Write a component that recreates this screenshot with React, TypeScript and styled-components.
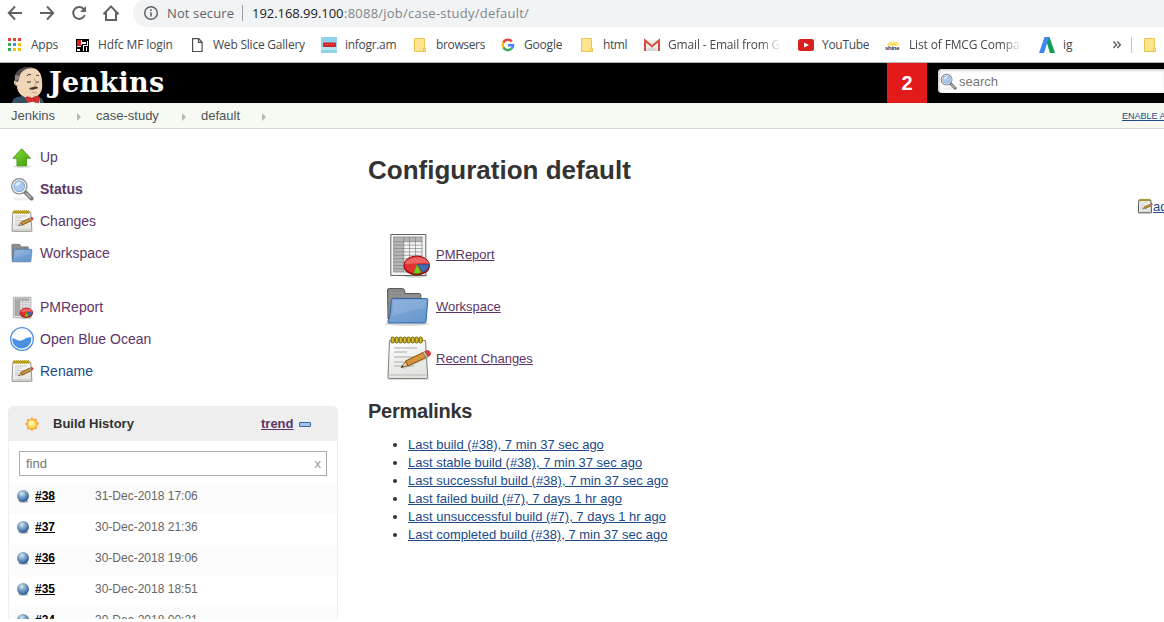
import React from 'react';
import styled, { createGlobalStyle } from 'styled-components';

const Global = createGlobalStyle`
  * { box-sizing: border-box; }
  html, body { margin: 0; padding: 0; background: #fff; overflow: hidden; }
  body { font-family: 'Liberation Sans', Arial, sans-serif; font-size: 13px; color: #333; }
  svg { display: block; flex: none; }
`;

const Page = styled.div`
  width: 1164px;
  height: 619px;
  overflow: hidden;
  display: flex;
  flex-direction: column;
`;

const Toolbar = styled.div`
  display: flex;
  height: 27px;
  flex: none;
  background: #fff;
`;
const NavIcons = styled.div`
  display: flex;
  align-items: center;
  gap: 12px;
  width: 133px;
  padding: 0 0 1px 5px;
`;
const Omnibox = styled.div`
  flex: 1;
  display: flex;
  align-items: center;
  height: 28px;
  margin-top: -1px;
  padding-left: 10px;
  background: #f1f3f4;
  border-radius: 14px 0 0 14px;
  font-family: 'Open Sans', 'Noto Sans', sans-serif;
  font-size: 13px;
  color: #80868b;
  white-space: pre;
`;
const Secure = styled.span`
  width: 67px;
  margin-left: 8px;
  color: #5f6368;
  letter-spacing: 0.12px;
`;
const Bar = styled.i`
  width: 1px;
  height: 16px;
  margin: 0 9px 0 8px;
  background: #9aa0a6;
`;
const Host = styled.span`
  width: 92px;
  color: #202124;
  letter-spacing: -0.04px;
`;
const Path = styled.span`
  letter-spacing: 0.23px;
`;

const Bookmarks = styled.div`
  display: flex;
  align-items: center;
  height: 36px;
  flex: none;
  padding-left: 7px;
  border-bottom: 1px solid #b4b6b9;
  font-family: 'Open Sans', 'Noto Sans', sans-serif;
  font-size: 12px;
  color: #45484c;
`;
const Bookmark = styled.div<{ $w: number; $ls: number }>`
  display: flex;
  align-items: center;
  gap: 8px;
  flex: none;
  width: ${(p) => p.$w}px;
  letter-spacing: ${(p) => p.$ls}px;
  white-space: nowrap;
`;
const BookmarkText = styled.span<{ $fade?: boolean }>`
  overflow: hidden;
  ${(p) => p.$fade && 'width: 113px; -webkit-mask-image: linear-gradient(90deg, #000 82%, transparent);'}
`;
const BarDivider = styled.i`
  width: 1px;
  height: 16px;
  margin: 0 10px 0 9px;
  background: #c4c6c9;
`;

const Header = styled.header`
  display: flex;
  align-items: center;
  height: 40px;
  flex: none;
  background: #000;
`;
const Brand = styled.div`
  display: flex;
  align-items: center;
  width: 887px;
  height: 40px;
  padding-left: 11px;
  gap: 4px;
`;
const BrandName = styled.span`
  font: bold 27px/39px 'DejaVu Serif', serif;
  height: 40px;
  color: #fff;
  letter-spacing: 0.3px;
`;
const Alert = styled.div`
  width: 40px;
  height: 40px;
  background: #e21a1a;
  color: #fff;
  font: bold 20px/40px 'Liberation Sans', sans-serif;
  text-align: center;
`;
const Search = styled.div`
  display: flex;
  align-items: center;
  flex: 1;
  gap: 2px;
  height: 24px;
  margin: -4px 0 0 11px;
  padding-left: 2px;
  border-radius: 4px 0 0 4px;
  background: #fff;
  box-shadow: inset 1px 1px 3px #bbb;
  color: #757575;
`;
const Crumbs = styled.nav`
  display: flex;
  height: 26px;
  flex: none;
  padding-left: 11px;
  background: #f6faf2;
  border-bottom: 1px solid #d3d7cf;
  line-height: 25px;
  color: #4d545d;
`;
const Crumb = styled.span<{ $w: number }>`
  display: flex;
  justify-content: space-between;
  align-items: center;
  width: ${(p) => p.$w}px;
  margin-right: 15px;
`;
const Arrow = styled.i`
  margin-top: 2px;
  border: 4px solid transparent;
  border-left: 4px solid #b5b8b0;
  border-right: 0;
`;
const Refresh = styled.a`
  margin-left: auto;
  width: 42px;
  padding-top: 1px;
  overflow: hidden;
  white-space: nowrap;
  font-size: 9px;
  text-decoration: underline;
  color: #204a87;
`;

const Body = styled.div`
  display: flex;
  flex: 1;
  min-height: 0;
`;
const Side = styled.aside`
  width: 338px;
  padding: 12px 0 0 8px;
`;
const Tasks = styled.div<{ $gap?: number }>`
  display: flex;
  flex-direction: column;
  margin-bottom: ${(p) => p.$gap ?? 0}px;
`;
const Task = styled.a<{ $bold?: boolean; $blue?: boolean }>`
  display: flex;
  align-items: center;
  gap: 6px;
  height: 32px;
  padding-left: 2px;
  font-size: 14px;
  font-weight: ${(p) => (p.$bold ? 'bold' : 'normal')};
  color: ${(p) => (p.$blue ? '#204a87' : '#5c3566')};
`;
const Panel = styled.section`
  width: 330px;
  height: 260px;
  border: 1px solid #eee;
  border-radius: 5px 5px 0 0;
`;
const PanelHead = styled.div`
  display: flex;
  align-items: center;
  height: 34px;
  padding: 0 0 1px 16px;
  background: #eee;
  border-radius: 4px 4px 0 0;
  font-weight: bold;
`;
const PanelTitle = styled.span`
  flex: none;
  width: 208px;
  margin-left: 14px;
`;
const Trend = styled.a`
  width: 38px;
  text-decoration: underline;
  color: #5c3566;
`;
const Find = styled.div`
  display: flex;
  justify-content: space-between;
  align-items: center;
  height: 25px;
  margin: 10px 10px 7px;
  padding: 0 5px 0 6px;
  border: 1px solid #a9a9a9;
  color: #757575;
`;
const Clear = styled.span`
  font-size: 13px;
  color: #999;
`;
const Build = styled.div<{ $odd: boolean }>`
  display: flex;
  align-items: center;
  height: 31px;
  padding: 0 0 5px 7px;
  background: ${(p) => (p.$odd ? '#fbfbfb' : '#fff')};
`;
const BuildNo = styled.a`
  width: 60px;
  margin-left: 5px;
  font-size: 12px;
  font-weight: bold;
  text-decoration: underline;
  color: #000;
`;
const BuildDate = styled.span`
  font-size: 12px;
  color: #666;
`;

const Main = styled.main`
  flex: 1;
  padding: 26px 0 0 30px;
`;
const Title = styled.h1`
  margin: 0;
  font-size: 26px;
  line-height: 30px;
`;
const AddRow = styled.div`
  display: flex;
  justify-content: flex-end;
  align-items: center;
  height: 16px;
  margin-top: 13px;
`;
const AddLink = styled.a`
  width: 11px;
  overflow: hidden;
  white-space: nowrap;
  text-decoration: underline;
  color: #204a87;
`;
const Links = styled.div`
  display: flex;
  flex-direction: column;
  gap: 4px;
  margin: 16px 0 0 16px;
`;
const BigLink = styled.a`
  display: flex;
  align-items: center;
  gap: 4px;
  height: 48px;
  color: #5c3566;
  text-decoration: underline;
`;
const Sub = styled.h2`
  margin: 17px 0 0;
  font-size: 20px;
  line-height: 24px;
  letter-spacing: -0.25px;
`;
const Permalinks = styled.ul`
  margin: 13px 0 0;
  padding-left: 40px;
  line-height: 18px;
`;
const Permalink = styled.a`
  color: #204a87;
  text-decoration: underline;
`;

/* ---------- icons ---------- */

const NavStroke = { fill: 'none', stroke: '#5f6368', strokeWidth: 2 };
const Back = () => (
  <svg width="20" height="20" viewBox="0 0 20 20" {...NavStroke}><path d="M17 10H4M10 3.5 3.8 10l6.2 6.5" /></svg>
);
const Forward = () => (
  <svg width="20" height="20" viewBox="0 0 20 20" {...NavStroke}><path d="M3 10h13M10 3.5 16.2 10 10 16.5" /></svg>
);
const Reload = () => (
  <svg width="20" height="20" viewBox="0 0 20 20" {...NavStroke}>
    <path d="M15 6.300A6 6 0 1 0 15.800 12" /><path d="M17 3v6h-6z" fill="#5f6368" stroke="none" />
  </svg>
);
const Home = () => (
  <svg width="20" height="20" viewBox="0 0 20 20" {...NavStroke}><path d="M2.500 11.300 10 3.400l7.500 7.900M5 9.500v7.500h10V9.500" /></svg>
);
const Info = () => (
  <svg width="16" height="16" viewBox="0 0 16 16">
    <circle cx="8" cy="8" r="6.300" fill="none" stroke="#5f6368" strokeWidth="1.500" />
    <path d="M8 7.200v4.300M8 4.300v1.600" stroke="#5f6368" strokeWidth="1.600" />
  </svg>
);

const AppsIcon = () => {
  const colors = ['#ea4335', '#ea4335', '#ea4335', '#34a853', '#4285f4', '#fbbc05', '#34a853', '#fbbc05', '#fbbc05'];
  return (
    <svg width="16" height="16" viewBox="0 0 16 16">
      {colors.map((c, i) => <rect key={i} x={1 + (i % 3) * 5} y={1 + Math.floor(i / 3) * 5} width="3" height="3" fill={c} />)}
    </svg>
  );
};
const HdfcIcon = () => (
  <svg width="16" height="16" viewBox="0 0 16 16">
    <path fill="#000" d="M2 2h13v13H2z" />
    <path fill="#fff" d="M7 3h1v5H7zM8 5h4v2H8zM3 9h4v1H3zM9 8h5v1H9zM13 4h1v4h-1zM9 9h1v5H9zM3 12h3v2H3zM12 10h1v4h-1z" />
    <path fill="#d81f1f" d="M3 3h4v6H3z" />
  </svg>
);
const PageIcon = () => (
  <svg width="16" height="16" viewBox="0 0 16 16" fill="none" stroke="#4c4f53" strokeWidth="1.200">
    <path d="M3.600 1.600h6l3.500 3.500v9.400H3.600zM9.500 1.600v3.700h3.600" />
  </svg>
);
const InfogramIcon = () => (
  <svg width="16" height="16" viewBox="0 0 16 16">
    <path fill="#8ed3e8" d="M0 0h16v16H0z" /><path fill="#b5e4f1" d="M0 10h16v3H0z" />
    <rect x="2" y="5.500" width="13" height="4.500" rx="1" fill="#cf222b" /><path stroke="#e06060" strokeDasharray="1 1" d="M4 7.500h9" />
  </svg>
);
const YellowFolder = () => (
  <svg width="16" height="16" viewBox="0 0 16 16">
    <path fill="#fee48f" stroke="#ebc64f" d="M2.500 1.500h10v10h1v3h-11z" /><path fill="#fee48f" stroke="#ebc64f" d="M11.500 11.500h2v3h-2z" />
  </svg>
);
const GoogleIcon = () => (
  <svg width="16" height="16" viewBox="0 0 16 16" fill="none" strokeWidth="2.400">
    <path stroke="#ea4335" d="M3.300 5.600A5 5 0 0 1 11.800 4.600" /><path stroke="#fbbc05" d="M3.400 10.400A5 5 0 0 1 3.300 5.600" />
    <path stroke="#34a853" d="M11.400 11.700A5 5 0 0 1 3.400 10.400" /><path stroke="#4285f4" d="M8 8.200h5.100a5 5 0 0 1-1.700 3.500" />
  </svg>
);
const GmailIcon = () => (
  <svg width="16" height="16" viewBox="0 0 16 16">
    <path fill="#ececec" d="M1 3h14v11H1z" /><path fill="#d8d8d8" d="m1 14 7-5 7 5z" />
    <path fill="none" stroke="#d54b3d" strokeWidth="2" d="M1 14V3.500l7 5.800 7-5.800V14" />
  </svg>
);
const YouTubeIcon = () => (
  <svg width="16" height="16" viewBox="0 0 16 16"><rect y="2" width="16" height="12" rx="2.500" fill="#d8201f" /><path fill="#fff" d="M6 5.500 11 8l-5 2.500z" /></svg>
);
const ShineText = styled.text`
  font: bold 6px 'Liberation Sans', sans-serif;
  letter-spacing: -0.3px;
`;
const ShineIcon = () => (
  <svg width="16" height="16" viewBox="0 0 16 16">
    <path fill="#fbd22f" d="M2 8.500a6.500 5.500 0 0 1 12.500 0z" /><path fill="none" stroke="#fff" d="M4 8c1-3 7-3 9 0" />
    <ShineText x="0" y="13" fill="#262d63">shine</ShineText>
  </svg>
);
const AdsIcon = () => (
  <svg width="16" height="16" viewBox="0 0 16 16">
    <path fill="#0f9d58" d="M6 0h4.500L16 16h-5z" /><path fill="#4285f4" d="M5.500 0H10L5 16H0z" />
  </svg>
);
const More = () => (
  <svg width="10" height="10" viewBox="0 0 10 10" fill="none" stroke="#5f6368" strokeWidth="1.500"><path d="m1.500 1.500 3 3.200-3 3.200M5.300 1.500l3 3.200-3 3.200" /></svg>
);

const Butler = () => (
  <svg width="34" height="40" viewBox="0 0 34 40">
    <path fill="#335061" d="M1 40c0-3 2-5 5-6l6-1 14 1c4 0 6 2 7 6z" />
    <path fill="#f0d6b7" d="M10 32C7 29 6 26 6 23c-3-1-4-4-2-6C4 9 10 4.500 18 4.500c9 0 13 6 13 14 1 8-1 12-5 15-5 2.500-12 1.500-16-1.500z" />
    <path fill="#4c4a4a" d="M4 18C2.500 12 6 7 11 5c4-1.500 9-1 12 .5-4-.5-8 0-11 2.500-3 2-3.500 5-4 8l-1 3z" />
    <path fill="#8b8580" d="m4 12 4.500.5L7.500 17 4 17.500z" />
    <path fill="none" stroke="#3c342c" strokeWidth="1" d="M16 13c1-2 3-2 4-1M25 13c1-1 2-1 3 0M16 18.500c1 1 3 1 4 0M25 18.500c1 1 2 1 3 0" />
    <path fill="none" stroke="#b08c6c" strokeWidth=".8" d="M5 19c-1.500 1-.5 4 1.500 3.500M23 15c1 3 3 6 1 7.500M21 29c2 1 3 1 5 0" />
    <path fill="#4c3a2e" d="M18 26c1-2 3-1.500 5-2.300 2-.5 4 0 4 1.300-1 1-2 .7-3.500 1.200-2 .8-4 .8-5.500-.2z" />
    <path fill="#fff" d="m14 33.500 8 1 6-1 1 6.500H17z" />
    <path fill="#e0302c" stroke="#8d1c1a" strokeWidth=".6" d="M15 34c2.500-.5 4.500.5 6 1.500 2-1.500 4-3 7-2v6c-3 .5-5-.5-6.500-1.500-1.500 1-3 1.500-5.500 1z" />
    <circle cx="21.500" cy="36.700" r="1.700" fill="#ef3d3a" stroke="#811" strokeWidth=".6" />
  </svg>
);

const Magnifier = ({ size }: { size: number }) => (
  <svg width={size} height={size} viewBox="0 0 24 24">
    <ellipse cx="12" cy="22" rx="9" ry="1.500" fill="#eee" />
    <path d="m15 15 6.500 6.500" stroke="#777" strokeWidth="4" strokeLinecap="round" /><path d="m16 16 5 5" stroke="#c4c4c4" strokeWidth="1.500" />
    <circle cx="9.300" cy="9.300" r="7.600" fill="#b9d4f1" stroke={size < 20 ? '#5d605d' : '#888b88'} strokeWidth="1.300" />
    <circle cx="9.300" cy="9.300" r="6.300" fill="none" stroke="#f7f7f7" strokeWidth="1.200" />
    <circle cx="9.300" cy="9.300" r="5.400" fill="#a9c8ec" stroke="#6f98c9" strokeWidth=".7" />
    <path fill="#dceafa" d="M5 9c0-3 3-5 6-4-1 3-3 4-6 4z" />
  </svg>
);
const UpArrow = () => (
  <svg width="24" height="24" viewBox="0 0 24 24">
    <defs><linearGradient id="up" x2="1" y2="1"><stop stopColor="#8ae234" /><stop offset="1" stopColor="#3c9a08" /></linearGradient></defs>
    <ellipse cx="12" cy="21.500" rx="9" ry="1.500" fill="#ddd" />
    <path d="m11.700 3.800 8.800 9.400h-4v7.600H7v-7.600H3z" fill="url(#up)" stroke="#4a9d18" />
  </svg>
);
const Notepad = ({ size }: { size: number }) => {
  const small = size < 48;
  return (
    <svg width={size} height={size} viewBox="0 0 48 48">
      <defs><linearGradient id="paper" y2="1" x2=".3"><stop stopColor="#fff" /><stop offset="1" stopColor="#e3e3e0" /></linearGradient></defs>
      <path fill="#ccc" d="M3 43h42v3H3z" opacity=".6" />
      <path d="M5.500 6.500h36l2.200 36q0 2-2 2H6q-2 0-2-2z" fill="url(#paper)" stroke={size < 20 ? '#55554f' : '#7d7d77'} strokeWidth={size < 20 ? 3 : small ? 1.600 : 1} />
      <path d="M4.500 41h39" stroke="#bbb" strokeWidth="1" />
      <path d="M10 14h23M10 18h13M10 23h23M10 28h20M10 32h20" stroke="#aaa" strokeWidth="1.200" />
      {Array.from({ length: 8 }, (_, i) => <rect key={i} x={7.200 + i * 4} y="3" width="3" height="6" rx="1.500" fill="#d8bf32" stroke="#84700a" strokeWidth="1.100" />)}
      <path d="m19 34 25-11" stroke="#bbb" strokeWidth="3" opacity=".6" />
      <path d="m17 33.500 5-6.500 2.500 4.500z" fill="#ecd2a0" stroke="#77511d" strokeWidth=".8" />
      <path d="M21.500 27 39 18.500l3 5-18 8.500z" fill="#d69539" stroke="#80500c" strokeWidth={small ? 1.800 : 1} />
      <path d="m39 18.500 2-1 3 5-2 1z" fill="#ccc" stroke="#777" strokeWidth=".6" />
      <path d="m41 17.500 2.500-1c2-.3 4.300 3 2.500 4.700l-2 1.300z" fill="#e24040" stroke="#a51f1f" strokeWidth=".6" />
      <path d="m17 33.500 1.500-2 1 1.500z" fill="#222" />
    </svg>
  );
};
const FolderIcon = ({ size }: { size: number }) => (
  <svg width={size} height={size} viewBox="0 0 48 48">
    <defs><linearGradient id="front" y2="1"><stop stopColor="#83a9d7" /><stop offset="1" stopColor="#6596cf" /></linearGradient></defs>
    <ellipse cx="23" cy="42" rx="22" ry="2" fill="#ddd" />
    <path d="M3.500 8q0-1.500 1.500-1.500h13.500q1.500 0 1.800 1.500l1 3.500h14q1.500 0 1.500 1.500v24H4z" fill="#898989" stroke="#5c5c5c" />
    <path d="M5 11h14M5 14h31M5 17h31" stroke="#a4a4a4" strokeWidth=".7" />
    <path d="M9.500 16.500h33q1.500 0 1.300 1.500L42 39.500q-.2 1.500-1.500 1.500H5q-1.400 0-1.200-1.500 2.800-4 3.500-21 0-2 2.200-2z" fill="url(#front)" stroke="#3465a4" />
    <path d="M9.500 18h32.600l-.7 8.500C27 27 18 32 8 33.500q1.200-7 1.500-15.500z" fill="#fff" opacity=".12" />
  </svg>
);
const Report = ({ size }: { size: number }) => (
  <svg width={size} height={size} viewBox="0 0 48 48">
    <ellipse cx="31" cy="45.500" rx="13" ry="2" fill="#ccc" />
    <path d="M6.800 4.500h35v41h-35z" fill="#f3f3f3" stroke="#666" />
    <path d="M9.700 7h28.600v35H9.700z" fill="#f4f4f4" /><path d="M9.700 7h28.600v4.700H9.700zM9.700 11h10v31h-10z" fill="#b5b5b5" />
    <path d="M19.700 7v35M25.500 7v35M31.500 7v35M38 7v35M9.700 7v35M9.700 11.700h28.600M9.700 15.100h28.600M9.700 18.500h28.600M9.700 21.900h28.600M9.700 25.300h28.600M9.700 28.700h28.600M9.700 32.100h28.600M9.700 35.500h28.600M9.700 38.900h28.600M9.700 42h28.600M9.700 7h28.600" stroke="#777" strokeWidth=".6" />
    <ellipse cx="32.700" cy="36.500" rx="13" ry="9" fill="#8b1111" />
    <ellipse cx="32.700" cy="35" rx="12.700" ry="9" fill="#e43030" stroke="#9c1010" />
    <path d="M21 34c1-8 22-9 24 0-7-3-17 1-24 0z" fill="#fff" opacity=".25" />
    <path d="M33 34.500h12q0 5-6 7.700z" fill="#3f6db0" stroke="#204a87" strokeWidth=".6" />
    <path d="m33 34.500 4 8q-3 1.300-7.500.8z" fill="#73d216" stroke="#4e9a06" strokeWidth=".6" />
  </svg>
);
const Ocean = () => (
  <svg width="24" height="24" viewBox="0 0 24 24">
    <circle cx="12" cy="12" r="11.300" fill="#fff" stroke="#4a90e2" strokeWidth="1.300" />
    <path fill="#4a90e2" d="M2.300 11.300c3.200 0 4.700 2.800 8 2.400 3.500-.4 5.500-4 10.800-3.500a9.500 9.500 0 1 1-18.800 1.100z" />
  </svg>
);
const Sun = () => (
  <svg width="14" height="14" viewBox="0 0 14 14">
    <path d="M7 0l1.500 2L11.500 1.500l.3 2.600L14 7l-2.200 2 .2 3-3 .2L7 14l-2-1.800-3 .2.200-3.200L0 7l2.200-2.200L2 2l3 .2z" fill="#fba63c" />
    <circle cx="7" cy="7" r="4.500" fill="#ffe066" stroke="#f8b13a" strokeWidth=".8" /><circle cx="6" cy="6" r="2.500" fill="#fff3a8" />
  </svg>
);
const Minus = () => (
  <svg width="12" height="6" viewBox="0 0 12 6"><rect x=".5" y="1.500" width="11" height="4" rx=".5" fill="#a6c3e8" stroke="#3465a4" /></svg>
);
const Ball = () => (
  <svg width="14" height="14" viewBox="0 0 14 14">
    <defs><radialGradient id="ball" cx=".4" cy=".3" r=".7"><stop stopColor="#dbe8dd" /><stop offset=".45" stopColor="#7ba3cc" /><stop offset="1" stopColor="#2a5793" /></radialGradient></defs>
    <ellipse cx="7.500" cy="12.500" rx="5" ry="1.300" fill="#bbb" /><circle cx="7" cy="7" r="6" fill="url(#ball)" />
  </svg>
);

const bookmarks: { icon: React.ReactNode; text: string; w: number; ls: number; fade?: boolean }[] = [
  { icon: <AppsIcon />, text: 'Apps', w: 67, ls: -0.25 },
  { icon: <HdfcIcon />, text: 'Hdfc MF login', w: 115, ls: -0.12 },
  { icon: <PageIcon />, text: 'Web Slice Gallery', w: 132, ls: -0.22 },
  { icon: <InfogramIcon />, text: 'infogr.am', w: 91, ls: -0.3 },
  { icon: <YellowFolder />, text: 'browsers', w: 88, ls: -0.5 + 0.15 },
  { icon: <GoogleIcon />, text: 'Google', w: 79, ls: -0.2 },
  { icon: <YellowFolder />, text: 'html', w: 65, ls: -0.4 },
  { icon: <GmailIcon />, text: 'Gmail - Email from Google', w: 154, ls: -0.16, fade: true },
  { icon: <YouTubeIcon />, text: 'YouTube', w: 87, ls: -0.3 },
  { icon: <ShineIcon />, text: 'List of FMCG Companies', w: 154, ls: -0.14, fade: true },
  { icon: <AdsIcon />, text: 'ig', w: 73, ls: 0 },
];

const builds = [
  ['#38', '31-Dec-2018 17:06'],
  ['#37', '30-Dec-2018 21:36'],
  ['#36', '30-Dec-2018 19:06'],
  ['#35', '30-Dec-2018 18:51'],
  ['#34', '30-Dec-2018 00:21'],
];

const permalinks = [
  'Last build (#38), 7 min 37 sec ago',
  'Last stable build (#38), 7 min 37 sec ago',
  'Last successful build (#38), 7 min 37 sec ago',
  'Last failed build (#7), 7 days 1 hr ago',
  'Last unsuccessful build (#7), 7 days 1 hr ago',
  'Last completed build (#38), 7 min 37 sec ago',
];

export default function App() {
  return (
    <Page>
      <Global />
      <Toolbar>
        <NavIcons><Back /><Forward /><Reload /><Home /></NavIcons>
        <Omnibox>
          <Info /><Secure>Not secure</Secure><Bar /><Host>192.168.99.100</Host><Path>:8088/job/case-study/default/</Path>
        </Omnibox>
      </Toolbar>
      <Bookmarks>
        {bookmarks.map((b) => (
          <Bookmark key={b.text} $w={b.w} $ls={b.ls}>{b.icon}<BookmarkText $fade={b.fade}>{b.text}</BookmarkText></Bookmark>
        ))}
        <More /><BarDivider /><YellowFolder />
      </Bookmarks>
      <Header>
        <Brand><Butler /><BrandName>Jenkins</BrandName></Brand>
        <Alert>2</Alert>
        <Search><Magnifier size={17} />search</Search>
      </Header>
      <Crumbs>
        <Crumb $w={70}>Jenkins<Arrow /></Crumb>
        <Crumb $w={90}>case-study<Arrow /></Crumb>
        <Crumb $w={65}>default<Arrow /></Crumb>
        <Refresh>ENABLE AUTO REFRESH</Refresh>
      </Crumbs>
      <Body>
        <Side>
          <Tasks $gap={22}>
            <Task><UpArrow />Up</Task>
            <Task $bold><Magnifier size={24} />Status</Task>
            <Task><Notepad size={24} />Changes</Task>
            <Task><FolderIcon size={24} />Workspace</Task>
          </Tasks>
          <Tasks $gap={19}>
            <Task><Report size={24} />PMReport</Task>
            <Task><Ocean />Open Blue Ocean</Task>
            <Task $blue><Notepad size={24} />Rename</Task>
          </Tasks>
          <Panel>
            <PanelHead><Sun /><PanelTitle>Build History</PanelTitle><Trend>trend</Trend><Minus /></PanelHead>
            <Find>find<Clear>x</Clear></Find>
            {builds.map(([no, date], i) => (
              <Build key={no} $odd={i % 2 === 0}><Ball /><BuildNo>{no}</BuildNo><BuildDate>{date}</BuildDate></Build>
            ))}
          </Panel>
        </Side>
        <Main>
          <Title>Configuration default</Title>
          <AddRow><Notepad size={16} /><AddLink>add description</AddLink></AddRow>
          <Links>
            <BigLink><Report size={48} />PMReport</BigLink>
            <BigLink><FolderIcon size={48} />Workspace</BigLink>
            <BigLink><Notepad size={48} />Recent Changes</BigLink>
          </Links>
          <Sub>Permalinks</Sub>
          <Permalinks>
            {permalinks.map((t) => <li key={t}><Permalink>{t}</Permalink></li>)}
          </Permalinks>
        </Main>
      </Body>
    </Page>
  );
}
